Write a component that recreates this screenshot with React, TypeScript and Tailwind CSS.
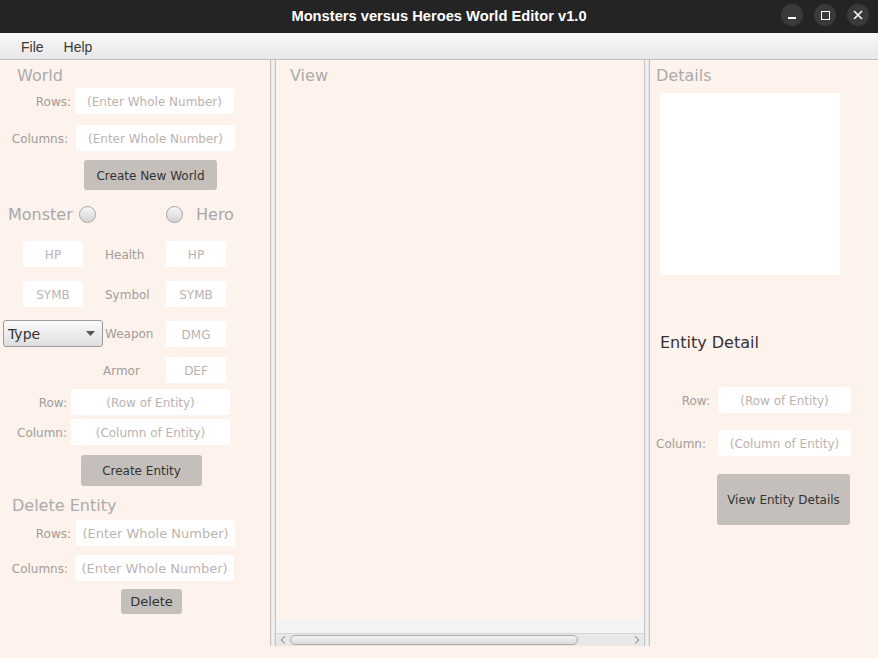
import React from "react";

const F = { fontFamily: '"DejaVu Sans", Verdana, sans-serif' };

function Field({ w, text, h = 26, size = 12 }: { w: number; text: string; h?: number; size?: number }) {
  return (
    <div
      className="bg-white rounded-[3px] flex items-center justify-center pt-[2px] text-[#bcb3ae] whitespace-nowrap overflow-hidden shrink-0"
      style={{ width: w, height: h, fontSize: size }}
    >
      {text}
    </div>
  );
}

function Radio() {
  return (
    <div className="w-[17px] h-[17px] rounded-full border border-[#a3a3a3] bg-gradient-to-b from-[#f7f7f7] to-[#d4d4d4] shrink-0" />
  );
}

export default function App() {
  return (
    <div className="w-[878px] h-[658px] flex flex-col bg-[#fdf2ec] overflow-hidden" style={F}>
      {/* Title bar */}
      <div className="h-[33px] bg-[#242424] flex items-center relative shrink-0">
        <div
          className="flex-1 text-center text-white font-bold text-[14.7px]"
          style={{ fontFamily: '"Liberation Sans", Arial, sans-serif' }}
        >
          Monsters versus Heroes World Editor v1.0
        </div>
        <div className="absolute right-[9px] top-[4px] flex gap-[11px]">
          <div className="w-[22px] h-[22px] rounded-full bg-[#3a3a3a] flex items-center justify-center">
            <div className="w-[8px] h-[2px] bg-white mt-[6px]" />
          </div>
          <div className="w-[22px] h-[22px] rounded-full bg-[#3a3a3a] flex items-center justify-center">
            <div className="w-[9px] h-[9px] border-[1.5px] border-white" />
          </div>
          <div className="w-[22px] h-[22px] rounded-full bg-[#3a3a3a] flex items-center justify-center">
            <svg width="10" height="10" viewBox="0 0 10 10">
              <path d="M1 1L9 9M9 1L1 9" stroke="white" strokeWidth="1.5" />
            </svg>
          </div>
        </div>
      </div>

      {/* Menu bar */}
      <div
        className="h-[27px] shrink-0 bg-gradient-to-b from-[#f8f8f8] to-[#e8e8e8] border-b border-[#bdbdbd] flex items-center pt-[2px] text-[14px] text-[#3a3a3a]"
        style={{ fontFamily: '"Liberation Sans", Arial, sans-serif' }}
      >
        <span className="ml-[21px]">File</span>
        <span className="ml-[20px]">Help</span>
      </div>

      {/* Content */}
      <div className="flex h-[586px] shrink-0">
        {/* Left panel */}
        <div className="w-[270px] shrink-0 flex flex-col text-[12px] text-[#a39c98]">
          <div className="mt-[6px] h-[20px] leading-[20px] pl-[17px] text-[16px] text-[#ababab]">World</div>

          <div className="mt-[2px] h-[26px] flex items-center">
            <div className="w-[71px] text-right pt-[2px]">Rows:</div>
            <div className="ml-[4px]"><Field w={159} text="(Enter Whole Number)" /></div>
          </div>
          <div className="mt-[11px] h-[26px] flex items-center">
            <div className="w-[68px] text-right pt-[2px]">Columns:</div>
            <div className="ml-[8px]"><Field w={159} text="(Enter Whole Number)" /></div>
          </div>
          <div className="mt-[9px] ml-[84px] w-[133px] h-[30px] rounded-[3px] bg-[#c4bfbb] flex items-center justify-center pt-[2px] text-[12px] text-[#333]">
            Create New World
          </div>

          <div className="mt-[12px] h-[24px] flex items-center text-[16px] text-[#a8a8a8]">
            <span className="ml-[8px] w-[71px] pt-[2px]">Monster</span>
            <Radio />
            <div className="ml-[70px]"><Radio /></div>
            <span className="ml-[13px] pt-[2px]">Hero</span>
          </div>

          <div className="mt-[15px] h-[26px] flex items-center">
            <div className="ml-[23px]"><Field w={60} text="HP" /></div>
            <span className="ml-[22px] w-[61px] pt-[2px]">Health</span>
            <Field w={60} text="HP" />
          </div>
          <div className="mt-[14px] h-[26px] flex items-center">
            <div className="ml-[23px]"><Field w={60} text="SYMB" /></div>
            <span className="ml-[22px] w-[61px] pt-[2px]">Symbol</span>
            <Field w={60} text="SYMB" />
          </div>
          <div className="mt-[13px] h-[27px] flex items-center">
            <div className="ml-[3px] w-[100px] h-[27px] rounded-[3px] border border-[#9a9a9a] bg-gradient-to-b from-[#fbfbfb] to-[#dedede] flex items-center justify-between pl-[4px] pr-[7px] text-[14px] text-[#333]">
              <span className="pt-[2px]">Type</span>
              <svg width="9" height="5" viewBox="0 0 9 5">
                <path d="M0 0H9L4.5 5Z" fill="#555" />
              </svg>
            </div>
            <span className="ml-[2px] w-[61px]">Weapon</span>
            <Field w={60} text="DMG" />
          </div>
          <div className="mt-[10px] h-[26px] flex items-center">
            <span className="ml-[103px] w-[63px] pt-[2px]">Armor</span>
            <Field w={60} text="DEF" />
          </div>

          <div className="mt-[6px] h-[26px] flex items-center">
            <div className="w-[67px] text-right pt-[2px]">Row:</div>
            <div className="ml-[4px]"><Field w={159} text="(Row of Entity)" /></div>
          </div>
          <div className="mt-[4px] h-[26px] flex items-center">
            <div className="w-[67px] text-right pt-[2px]">Column:</div>
            <div className="ml-[4px]"><Field w={159} text="(Column of Entity)" /></div>
          </div>
          <div className="mt-[10px] ml-[81px] w-[121px] h-[31px] rounded-[3px] bg-[#c4bfbb] flex items-center justify-center text-[12px] text-[#333]">
            Create Entity
          </div>

          <div className="mt-[10px] h-[20px] leading-[20px] pl-[12px] text-[16px] text-[#ababab]">Delete Entity</div>
          <div className="mt-[4px] h-[26px] flex items-center">
            <div className="w-[71px] text-right pt-[2px]">Rows:</div>
            <div className="ml-[5px]"><Field w={159} text="(Enter Whole Number)" size={13} /></div>
          </div>
          <div className="mt-[9px] h-[26px] flex items-center">
            <div className="w-[68px] text-right pt-[2px]">Columns:</div>
            <div className="ml-[7px]"><Field w={159} text="(Enter Whole Number)" size={13} /></div>
          </div>
          <div className="mt-[8px] ml-[121px] w-[61px] h-[25px] rounded-[3px] bg-[#c4bfbb] flex items-center justify-center text-[13px] text-[#333]">
            Delete
          </div>
        </div>

        {/* Splitter */}
        <div className="w-[6px] shrink-0 border-x border-[#c4c4c4] bg-gradient-to-r from-[#e4e4e4] via-[#f6f6f6] to-[#e0e0e0]" />

        {/* Center panel */}
        <div className="flex-1 flex flex-col">
          <div className="mt-[6px] h-[20px] leading-[20px] pl-[14px] text-[16px] text-[#ababab]">View</div>
          <div className="flex-1" />
          <div className="h-[13px] bg-[#f3f3f3]" />
          <div className="h-[13px] bg-[#e8e8e8] border-t border-[#d6d6d6] flex items-center px-[4px]">
            <svg width="6" height="8" viewBox="0 0 6 8" className="shrink-0">
              <path d="M5 0.5L1 4L5 7.5" stroke="#777" strokeWidth="1" fill="none" />
            </svg>
            <div className="ml-[4px] w-[288px] h-[10px] rounded-[5px] border border-[#a9a9a9] bg-gradient-to-b from-[#f4f4f4] to-[#dcdcdc]" />
            <div className="flex-1" />
            <svg width="6" height="8" viewBox="0 0 6 8" className="shrink-0">
              <path d="M1 0.5L5 4L1 7.5" stroke="#777" strokeWidth="1" fill="none" />
            </svg>
          </div>
        </div>

        {/* Splitter */}
        <div className="w-[6px] shrink-0 border-x border-[#c4c4c4] bg-gradient-to-r from-[#e4e4e4] via-[#f6f6f6] to-[#e0e0e0]" />

        {/* Right panel */}
        <div className="w-[228px] shrink-0 flex flex-col text-[12px] text-[#a39c98]">
          <div className="mt-[6px] h-[20px] leading-[20px] pl-[6px] text-[16px] text-[#ababab]">Details</div>
          <div className="mt-[7px] ml-[10px] w-[180px] h-[182px] bg-white" />
          <div className="mt-[58px] h-[20px] leading-[20px] pl-[10px] text-[16px] text-[#333]">Entity Detail</div>
          <div className="mt-[34px] h-[26px] flex items-center">
            <div className="w-[60px] text-right pt-[2px]">Row:</div>
            <div className="ml-[8px]"><Field w={133} text="(Row of Entity)" /></div>
          </div>
          <div className="mt-[17px] h-[26px] flex items-center">
            <div className="w-[56px] text-right pt-[2px]">Column:</div>
            <div className="ml-[12px]"><Field w={133} text="(Column of Entity)" /></div>
          </div>
          <div className="mt-[18px] ml-[67px] w-[133px] h-[51px] rounded-[3px] bg-[#c4bfbb] flex items-center justify-center text-[12px] text-[#333]">
            View Entity Details
          </div>
        </div>
      </div>
      <div className="flex-1" />
    </div>
  );
}
